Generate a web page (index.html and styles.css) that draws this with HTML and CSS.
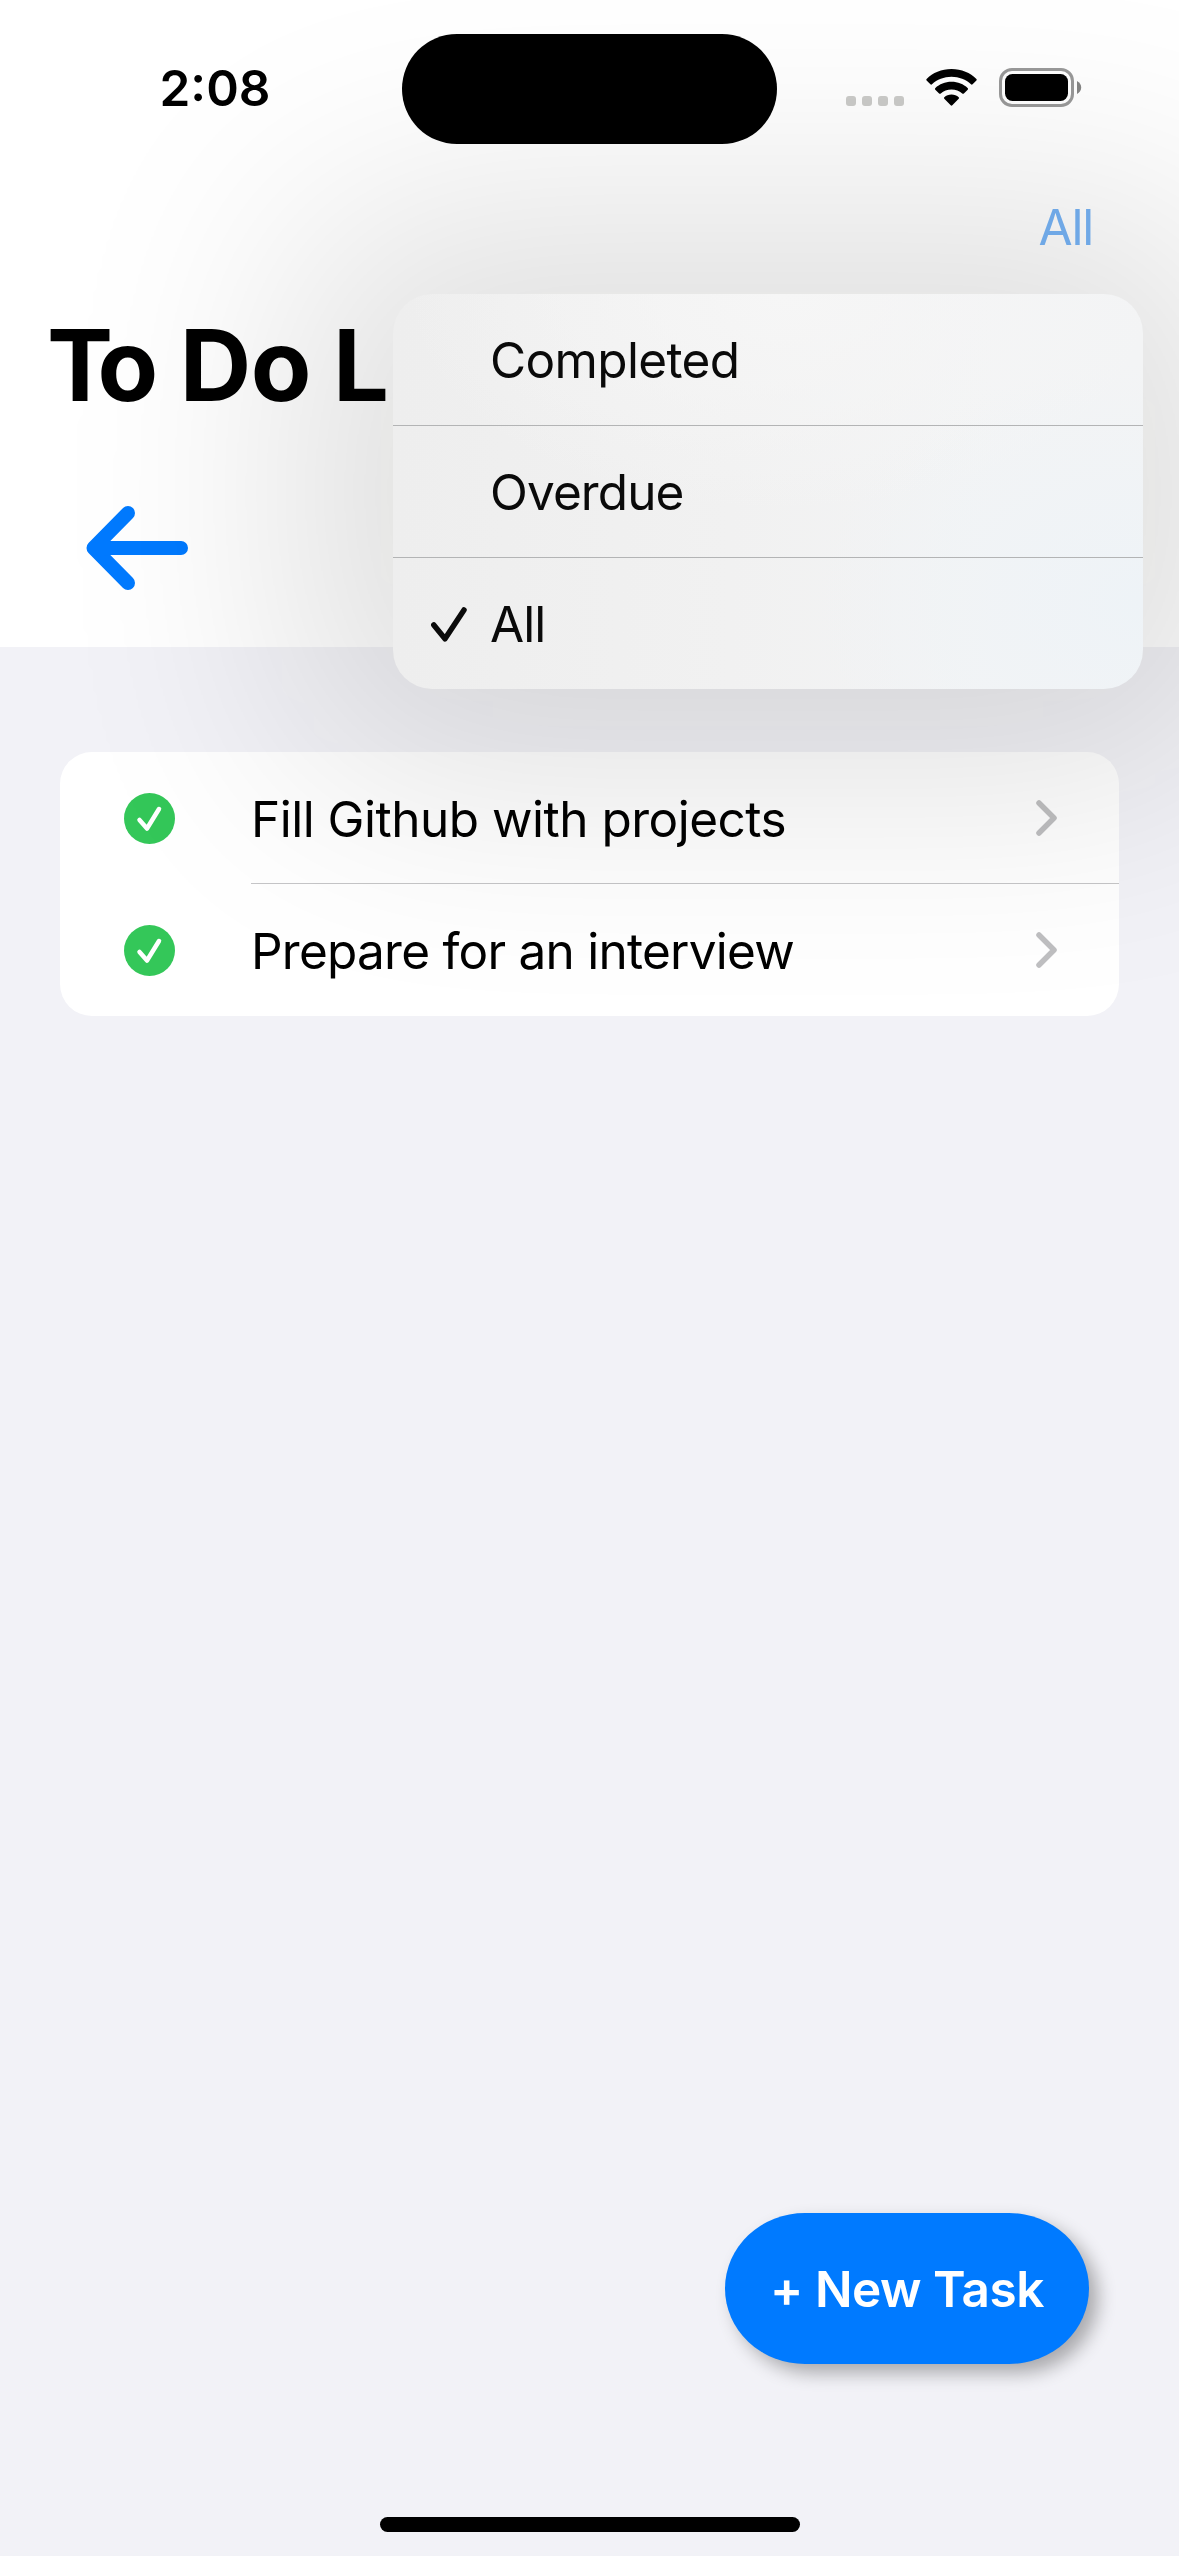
FILE: index.html
```html
<!DOCTYPE html>
<html lang="en">
<head>
<meta charset="utf-8">
<title>To Do List</title>
<link rel="stylesheet" href="styles.css">
</head>
<body>
<div class="screen">
  <header class="header">
    <div class="status-bar">
      <span class="clock">2:08</span>
      <div class="island"></div>
      <div class="status-icons">
        <svg class="cellular" viewBox="0 0 58 10"><rect width="10" height="10" rx="3"/><rect x="16" width="10" height="10" rx="3"/><rect x="32" width="10" height="10" rx="3"/><rect x="48" width="10" height="10" rx="3"/></svg>
        <svg class="wifi" viewBox="0 0 51 38"><path d="M25.5 0C35.5 0 44.300 3.800 50.400 10C50.900 10.500 50.900 11.100 50.400 11.600L46.600 15.300C46.100 15.800 45.500 15.800 45 15.300C40 10.600 33 7.800 25.500 7.800S11 10.600 6 15.300C5.500 15.800 4.900 15.800 4.400 15.300L.6 11.600C.1 11.100 .1 10.500 .6 10C6.700 3.800 15.500 0 25.500 0Z"/><path d="M25.500 12.800C31.900 12.800 37.600 15.200 41.600 19C42.200 19.500 42.200 20.200 41.700 20.700L37.900 24.400C37.400 24.900 36.800 24.900 36.200 24.400C33.400 21.900 29.700 20.400 25.500 20.400S17.600 21.900 14.800 24.400C14.200 24.900 13.600 24.900 13.100 24.400L9.300 20.700C8.800 20.200 8.800 19.500 9.400 19C13.400 15.200 19.100 12.800 25.500 12.800Z"/><path d="M25.500 25.500C28.300 25.500 30.800 26.500 32.700 28.200C33.200 28.700 33.200 29.300 32.700 29.800L26.300 36.300C25.800 36.800 25.200 36.800 24.700 36.300L18.300 29.800C17.800 29.300 17.800 28.700 18.300 28.200C20.200 26.500 22.700 25.500 25.500 25.500Z"/></svg>
        <svg class="battery" viewBox="0 0 83 39"><rect class="shell" x="1.500" y="1.500" width="72" height="36" rx="11.500"/><rect x="6" y="6" width="63" height="27" rx="7.500"/><path class="cap" d="M78 13C80.600 14.200 82.200 16.700 82.200 19.500S80.600 24.800 78 26Z"/></svg>
      </div>
    </div>
    <div class="nav"><span class="filter">All</span></div>
    <h1 class="title"><span class="kern">T</span>o Do L</h1>
    <div class="back"><svg viewBox="0 0 102 84"><path d="M42 7L7.500 42L42 77M8 42H95"/><path class="joint" d="M14 33.500L22 35L34 35.500V48.500L22 49L14 50.500Z"/></svg></div>
  </header>

  <main class="content">
    <ul class="tasks">
      <li class="task">
        <svg class="done" viewBox="0 0 51 51"><circle cx="25.500" cy="25.500" r="25.500"/><path d="M15.500 27L23 35.500L35 16"/></svg>
        <div class="task-body"><span class="fill">Fill Github with projects</span><svg class="chevron" viewBox="0 0 21 36"><path d="M3 3L18 18L3 33"/></svg></div>
      </li>
      <li class="task">
        <svg class="done" viewBox="0 0 51 51"><circle cx="25.500" cy="25.500" r="25.500"/><path d="M15.500 27L23 35.500L35 16"/></svg>
        <div class="task-body"><span>Prepare for an interview</span><svg class="chevron" viewBox="0 0 21 36"><path d="M3 3L18 18L3 33"/></svg></div>
      </li>
    </ul>
  </main>

  <footer class="footer">
    <button class="new-task">+ New Task</button>
    <div class="home-indicator"></div>
  </footer>

  <div class="menu-shadow"></div>
  <div class="menu">
    <div class="option"><span class="completed">Completed</span></div>
    <div class="option"><span>Overdue</span></div>
    <div class="option"><svg class="tick" viewBox="0 0 36 35"><path d="M2.800 18L14 31.800L33 3"/></svg><span>All</span></div>
  </div>
</div>
</body>
</html>
```
FILE: styles.css
```css
* { box-sizing: border-box; }

body {
  margin: 0;
  font-family: Inter, "Liberation Sans", sans-serif;
  font-size: 49.5px;
  line-height: 60px;
  color: #000;
}

.screen {
  position: relative;
  display: flex;
  flex-direction: column;
  width: 1179px;
  height: 2556px;
  overflow: hidden;
  background: #f2f2f7;
}

.header { height: 647px; background: #fff; }

.status-bar {
  display: grid;
  grid-template-columns: 402px 375px 402px;
  height: 177px;
  padding-top: 34px;
}

.clock {
  height: 110px;
  padding-left: 28px;
  text-align: center;
  font-weight: 600;
  line-height: 108px;
}

.island {
  position: relative;
  z-index: 3;
  height: 110px;
  border-radius: 55px;
  background: #000;
}

.status-icons { display: flex; padding: 34px 0 0 69px; }
.cellular { width: 58px; height: 10px; margin-top: 28px; fill: #cbcbc9; }
.wifi { width: 51px; height: 38px; margin: 1px 0 0 22px; }
.battery { width: 83px; height: 39px; margin-left: 22px; }
.shell { fill: none; stroke: #999; stroke-width: 3; }
.cap { fill: #858585; }

.nav {
  display: flex;
  justify-content: flex-end;
  height: 132px;
  padding: 20px 86px 0 0;
}
.filter { position: relative; z-index: 3; color: #6fa8e6; letter-spacing: -1.2px; }

.title {
  height: 113px;
  margin: 0;
  padding-left: 47px;
  font-size: 99px;
  font-weight: 700;
  line-height: 113px;
  letter-spacing: -.5px;
  word-spacing: -1px;
  white-space: nowrap;
}
.kern { letter-spacing: -15.5px; }

.back { padding: 84px 0 0 86px; }
.back svg { display: block; width: 102px; height: 84px; overflow: visible; }
.back path { fill: none; stroke: #007aff; stroke-width: 14; stroke-linecap: round; stroke-linejoin: round; }
.back .joint { fill: #007aff; stroke: none; }

.content { flex: 1; padding: 105px 60px 0; }

.tasks {
  margin: 0;
  padding: 0;
  list-style: none;
  border-radius: 32px;
  background: #fff;
}

.task { display: flex; align-items: center; height: 132px; padding-left: 64px; }
.done { width: 51px; height: 51px; margin-right: 76px; fill: #34c759; }
.done path { fill: none; stroke: #fff; stroke-width: 4.5; stroke-linecap: round; stroke-linejoin: round; }

.task-body {
  display: flex;
  flex: 1;
  align-items: center;
  justify-content: space-between;
  height: 132px;
  padding-right: 62px;
  letter-spacing: -.75px;
}
.task-body span { padding-top: 2px; }
.task-body .fill { letter-spacing: -.5px; }
.task:first-child .task-body { border-bottom: 1px solid #c6c6c8; }
.chevron { width: 21px; height: 36px; }
.chevron path { fill: none; stroke: #bfbfc1; stroke-width: 5.5; stroke-linecap: round; stroke-linejoin: round; }

.footer {
  display: flex;
  flex-direction: column;
  align-items: center;
  height: 343px;
}

.new-task {
  align-self: flex-end;
  width: 364px;
  height: 151px;
  margin-right: 90px;
  padding: 0;
  border: 0;
  border-radius: 80px / 75.5px;
  background: #007aff;
  box-shadow: 9px 9px 18px rgba(0, 0, 0, .3);
  color: #fff;
  font: 600 49.5px/60px Inter, "Liberation Sans", sans-serif;
  letter-spacing: -.5px;
  white-space: nowrap;
}

.home-indicator { width: 420px; height: 15px; margin-top: 153px; border-radius: 7.5px; background: #000; }

.menu {
  position: absolute;
  top: 294px;
  left: 393px;
  z-index: 2;
  width: 750px;
  height: 395px;
  border-radius: 39px;
  background:
    radial-gradient(ellipse 330px 240px at 100% 78%, #eef3f7, rgba(241, 243, 246, 0)),
    radial-gradient(ellipse 380px 220px at 52% 0, #f6f6f6, rgba(245, 245, 245, 0)),
    linear-gradient(90deg, #eeeeee, #f1f1f1 45%, #f3f4f5 80%);
  color: #0a0a0a;
  letter-spacing: -.9px;
}

.menu-shadow {
  position: absolute;
  top: 209px;
  left: 298px;
  z-index: 1;
  width: 940px;
  height: 565px;
  border-radius: 80px;
  background: #0a0a00;
  opacity: .125;
  filter: blur(125px);
}

.option {
  display: flex;
  align-items: center;
  height: 132px;
  padding: 1px 0 0 97px;
  border-bottom: 1px solid #b3b4b5;
}
.option:last-child { height: 131px; padding-left: 38px; border: 0; }
.completed { letter-spacing: -.65px; }
.tick { width: 36px; height: 35px; margin-right: 23px; }
.tick path { fill: none; stroke: #0a0a0a; stroke-width: 5.5; stroke-linecap: round; stroke-linejoin: round; }
```
